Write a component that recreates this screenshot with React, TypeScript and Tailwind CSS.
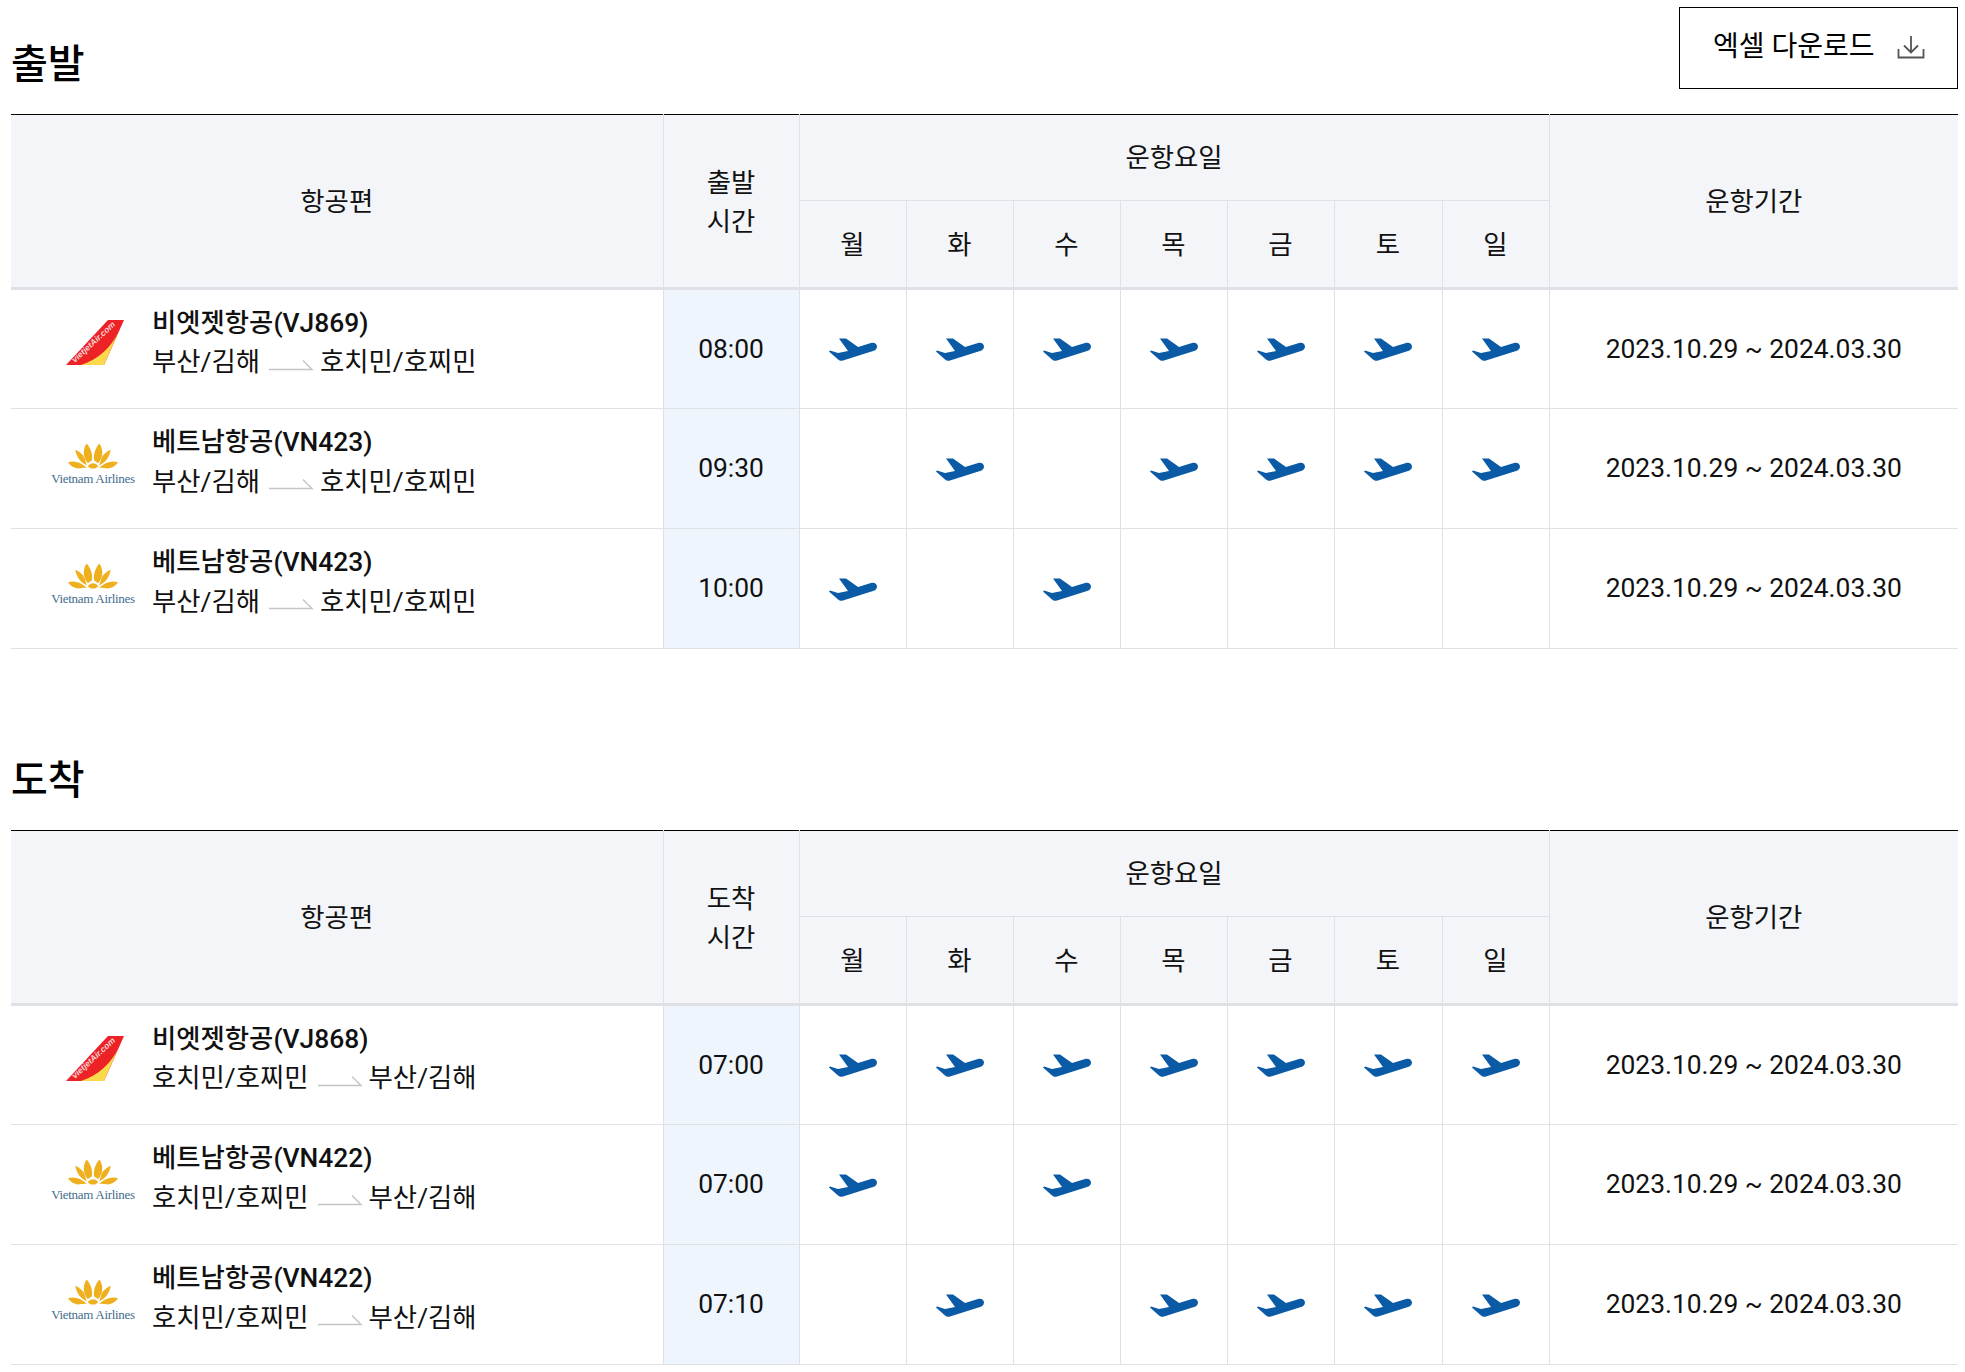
const DAYS = ['월', '화', '수', '목', '금', '토', '일'];

type Flight = { airline: 'vj' | 'vn'; name: string; code: string; from: string; to: string; time: string; days: number[] };

const DEPARTURES: Flight[] = [
  { airline: 'vj', name: '비엣젯항공', code: '(VJ869)', from: '부산/김해', to: '호치민/호찌민', time: '08:00', days: [0, 1, 2, 3, 4, 5, 6] },
  { airline: 'vn', name: '베트남항공', code: '(VN423)', from: '부산/김해', to: '호치민/호찌민', time: '09:30', days: [1, 3, 4, 5, 6] },
  { airline: 'vn', name: '베트남항공', code: '(VN423)', from: '부산/김해', to: '호치민/호찌민', time: '10:00', days: [0, 2] },
];

const ARRIVALS: Flight[] = [
  { airline: 'vj', name: '비엣젯항공', code: '(VJ868)', from: '호치민/호찌민', to: '부산/김해', time: '07:00', days: [0, 1, 2, 3, 4, 5, 6] },
  { airline: 'vn', name: '베트남항공', code: '(VN422)', from: '호치민/호찌민', to: '부산/김해', time: '07:00', days: [0, 2] },
  { airline: 'vn', name: '베트남항공', code: '(VN422)', from: '호치민/호찌민', to: '부산/김해', time: '07:10', days: [1, 3, 4, 5, 6] },
];

function Plane() {
  return (
    <svg viewBox="0 0 48 24" className="mx-auto mt-[2px] block h-[24px] w-[48px]" aria-hidden="true">
      <path
        d="M10 0.5 L17 0.5 L29 9 L42 5 C46 4 48 6.5 48 8.5 C48 11 46 12.5 44 13 L14 22.5 C12 23 11 23 9 21.5 L0 13.5 L1 12.5 L9 15 L19 13 Z"
        fill="#0a5aa5"
      />
    </svg>
  );
}

function VietjetLogo() {
  return (
    <svg viewBox="0 0 60 48" className="mb-[12px] ml-[4px] h-[48px] w-[60px]" aria-hidden="true">
      <path d="M43 1 L59 1 L39 46 L1 46 Z" fill="#ec2227" />
      <path d="M53 14 L39 46 L16 46 C34 40 46 28 53 14 Z" fill="#fbd94a" />
      <text x="10" y="44" transform="rotate(-43 10 44)" fill="#f9d5d5" fontSize="8.5" fontStyle="italic" fontWeight="700" fontFamily="Liberation Sans, sans-serif">
        vietjetAir.com
      </text>
    </svg>
  );
}

function VietnamLogo() {
  return (
    <div className="mb-[12px] flex w-[88px] flex-col items-center">
      <svg viewBox="0 0 48 26" className="h-[28px] w-[50px]" aria-hidden="true">
        <g fill="#eeb01f">
          <path d="M18 2 C14 7 14 15 19 21 L23 18 C24 11 21 6 18 2 Z" />
          <path d="M30 2 C34 7 34 15 29 21 L25 18 C24 11 27 6 30 2 Z" />
          <path d="M7 8 C8 15 12 20 18 23 L16 16 C14 12 11 10 7 8 Z" />
          <path d="M41 8 C40 15 36 20 30 23 L32 16 C34 12 37 10 41 8 Z" />
          <path d="M0 20 C6 18 12 20 18 25 L9 26 C5 25 2 23 0 20 Z" />
          <path d="M48 20 C42 18 36 20 30 25 L39 26 C43 25 46 23 48 20 Z" />
          <path d="M19 24 C21 20 27 20 29 24 L26 26 L22 26 Z" />
        </g>
      </svg>
      <span className="mt-[4px] whitespace-nowrap font-['Liberation_Serif',serif] text-[13px] leading-[12px] tracking-[-0.3px] text-[#3f6d8f]">
        Vietnam Airlines
      </span>
    </div>
  );
}

function RouteArrow() {
  return (
    <svg viewBox="0 0 46 12" className="mr-[6px] ml-[8px] mt-[5px] h-[12px] w-[46px] shrink-0" aria-hidden="true">
      <path d="M1 10.5 H44 L35 1.5" stroke="#c4c4c4" strokeWidth="1.4" fill="none" />
    </svg>
  );
}

function FlightTable({ timeLabel, flights }: { timeLabel: string; flights: Flight[] }) {
  return (
    <table className="w-full table-fixed border-collapse border-t-[1.5px] border-t-black text-center text-[26.4px] text-[#111]">
      <colgroup>
        <col className="w-[652px]" />
        <col className="w-[136px]" />
        <col className="w-[107px]" />
        <col className="w-[107px]" />
        <col className="w-[107px]" />
        <col className="w-[107px]" />
        <col className="w-[107px]" />
        <col className="w-[108px]" />
        <col className="w-[107px]" />
        <col />
      </colgroup>
      <thead>
        <tr className="h-[86px] bg-[#f3f5f9]">
          <th rowSpan={2} className="border-r border-b-[3px] border-r-[#dfe1e6] border-b-[#dfe1e6] pt-[3px] font-normal">항공편</th>
          <th rowSpan={2} className="border-r border-b-[3px] border-r-[#dfe1e6] border-b-[#dfe1e6] pt-[3px] font-normal leading-[39px]">
            {timeLabel}
            <br />
            시간
          </th>
          <th colSpan={7} className="border-r border-b border-[#dfe1e6] pt-[3px] font-normal">운항요일</th>
          <th rowSpan={2} className="border-b-[3px] border-b-[#dfe1e6] pt-[3px] font-normal">운항기간</th>
        </tr>
        <tr className="h-[88px] bg-[#f3f5f9]">
          {DAYS.map((d) => (
            <th key={d} className="border-r border-b-[3px] border-r-[#dfe1e6] border-b-[#dfe1e6] pt-[3px] font-normal">{d}</th>
          ))}
        </tr>
      </thead>
      <tbody>
        {flights.map((f, i) => (
          <tr key={i} className="h-[120px] border-b border-[#dfe1e6]">
            <td className="border-r border-[#dfe1e6] text-left">
              <div className="flex items-center">
                <div className="flex w-[141px] shrink-0 justify-center pl-[33px] pr-[10px]">
                  {f.airline === 'vj' ? <VietjetLogo /> : <VietnamLogo />}
                </div>
                <div className="pb-[13px] leading-[38.5px]">
                  <div className="mb-[1px] font-medium">
                    {f.name}
                    {f.code}
                  </div>
                  <div className="flex items-center">
                    <span>{f.from}</span>
                    <RouteArrow />
                    <span>{f.to}</span>
                  </div>
                </div>
              </div>
            </td>
            <td className="border-r border-[#dfe1e6] bg-[#eef5fd] pt-[1px]">{f.time}</td>
            {DAYS.map((_, d) => (
              <td key={d} className="border-r border-[#dfe1e6]">
                {f.days.includes(d) ? <Plane /> : null}
              </td>
            ))}
            <td className="pt-[1px]">2023.10.29 ~ 2024.03.30</td>
          </tr>
        ))}
      </tbody>
    </table>
  );
}

export default function App() {
  return (
    <div className="min-h-[1372px] bg-white pr-[7px] pb-[7px] pl-[11px] pt-[7px] font-['Roboto','Noto_Sans_CJK_KR',sans-serif] text-black">
      <section className="mb-[72px]">
        <div className="flex h-[107px] items-start justify-between">
          <h2 className="pt-[34px] text-[40px] leading-[48px] font-medium">출발</h2>
          <button className="flex h-[82px] w-[279px] items-center justify-between border-[1.5px] border-black pr-[32px] pl-[33px] text-[28px]">
            <span className="-mt-[2px]">엑셀 다운로드</span>
            <svg viewBox="0 0 28 24" className="-mt-[2px] h-[24px] w-[28px]" aria-hidden="true">
              <path d="M14 1 V17 M7 10.5 L14 17.5 L21 10.5 M1.5 14 V22.5 H26.5 V14" stroke="#555" strokeWidth="1.8" fill="none" />
            </svg>
          </button>
        </div>
        <FlightTable timeLabel="출발" flights={DEPARTURES} />
      </section>
      <section>
        <div className="flex h-[109px] items-start justify-between">
          <h2 className="pt-[36px] text-[40px] leading-[48px] font-medium">도착</h2>
        </div>
        <FlightTable timeLabel="도착" flights={ARRIVALS} />
      </section>
    </div>
  );
}
